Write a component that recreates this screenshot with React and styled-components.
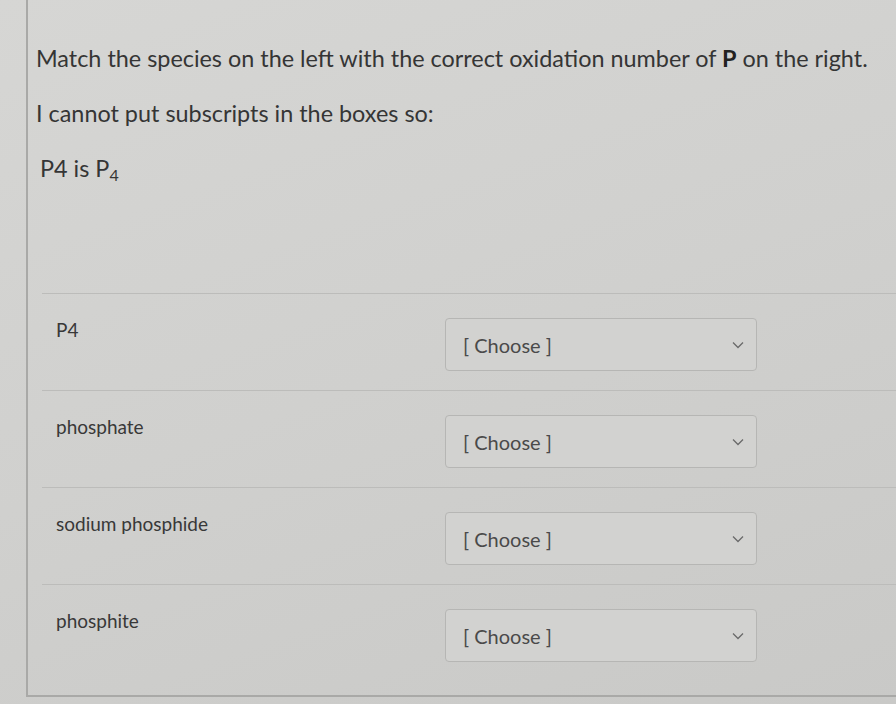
import React from 'react';
import styled, { createGlobalStyle } from 'styled-components';

const ITEMS = ['P4', 'phosphate', 'sodium phosphide', 'phosphite'];

const GlobalStyle = createGlobalStyle`
  html, body {
    margin: 0;
    padding: 0;
    background: #cfcfcd;
  }
  body {
    font-family: Lato, "Liberation Sans", sans-serif;
    color: #353535;
  }
`;

export default function App() {
  return (
    <>
      <GlobalStyle />
      <Page>
        <Card>
          <Question>
            <Para>
              Match the species on the left with the correct oxidation number of <b>P</b> on the right.
            </Para>
            <Para>I cannot put subscripts in the boxes so:</Para>
            <Para indent>
              P4 is P<sub>4</sub>
            </Para>
          </Question>
          <Answers>
            {ITEMS.map((item, index) => (
              <Row key={index}>
                <Label>{item}</Label>
                <Select>
                  <span>[ Choose ]</span>
                  <svg width="12" height="8" viewBox="0 0 12 8">
                    <path d="M1 1.5 L6 6.5 L11 1.5" fill="none" stroke="#6a6a6a" strokeWidth="1.3" />
                  </svg>
                </Select>
              </Row>
            ))}
          </Answers>
        </Card>
      </Page>
    </>
  );
}

const Page = styled.div`
  width: 896px;
  height: 704px;
  overflow: hidden;
  background: linear-gradient(160deg, #d6d6d4 0%, #d0d0ce 50%, #c9c9c7 100%);
`;

const Card = styled.div`
  margin-left: 26px;
  width: 900px;
  height: 697px;
  box-sizing: border-box;
  border-left: 2px solid #a9a9a7;
  border-bottom: 2px solid #a9a9a7;
  padding-top: 43px;
`;

const Question = styled.div`
  padding-left: 8px;
  height: 250px;
`;

const Para = styled.p`
  margin: 0 0 25px;
  padding-left: ${({ indent }) => (indent ? '4px' : '0')};
  font-size: 23.4px;
  line-height: 30px;
  white-space: nowrap;

  b {
    font-weight: 700;
    color: #222;
  }

  sub {
    font-size: 16px;
    vertical-align: -4px;
  }
`;

const Answers = styled.div`
  margin-left: 14px;
`;

const Row = styled.div`
  display: grid;
  grid-template-columns: 403px 312px;
  height: 97px;
  box-sizing: border-box;
  border-top: 1.5px solid #bcbcba;
  padding-top: 24px;
`;

const Label = styled.div`
  padding-left: 14px;
  padding-top: 0;
  font-size: 19px;
  line-height: 24px;
  color: #383838;
`;

const Select = styled.div`
  display: flex;
  align-items: center;
  justify-content: space-between;
  height: 53px;
  box-sizing: border-box;
  padding: 0 12px 0 17px;
  border: 1.5px solid #b6b6b4;
  border-radius: 4px;
  background: #d2d2d0;
  font-size: 20px;
  color: #4a4a4a;
`;
